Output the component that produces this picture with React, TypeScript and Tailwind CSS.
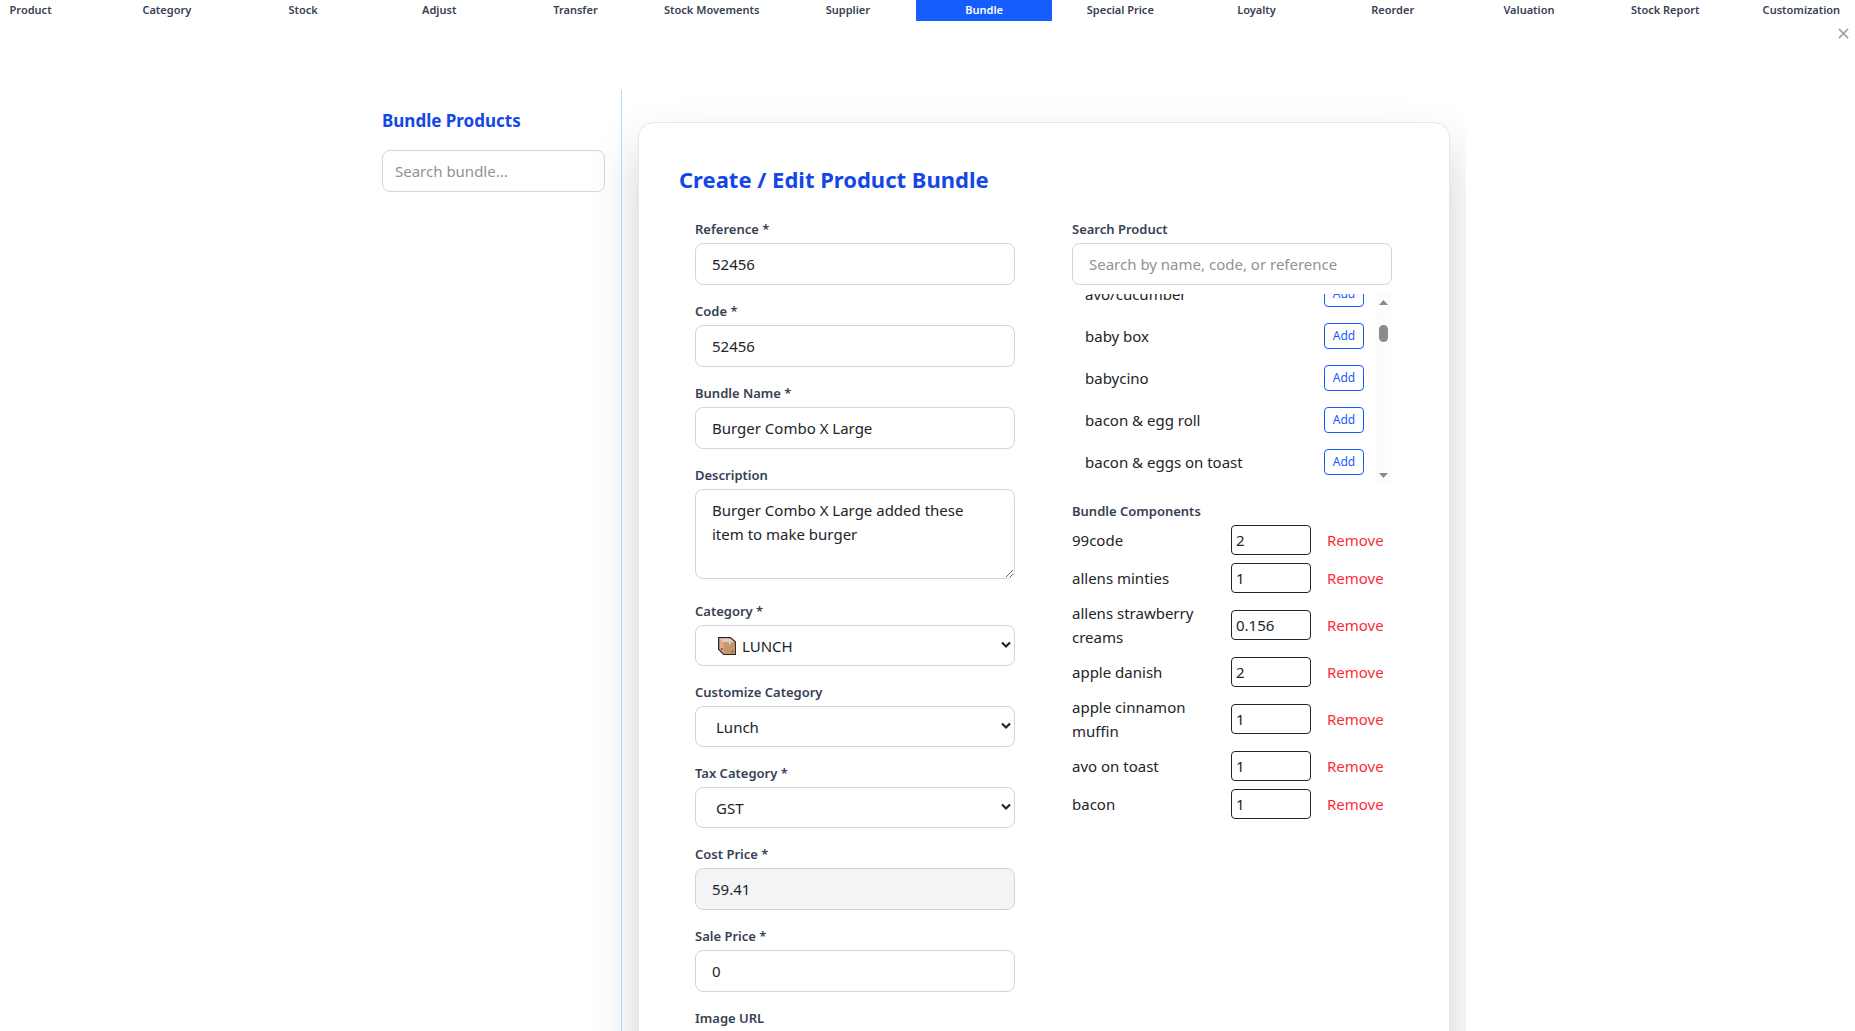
import { useState } from 'react';
import type { ReactNode } from 'react';

const tabs = [
  'Product',
  'Category',
  'Stock',
  'Adjust',
  'Transfer',
  'Stock Movements',
  'Supplier',
  'Bundle',
  'Special Price',
  'Loyalty',
  'Reorder',
  'Valuation',
  'Stock Report',
  'Customization',
];

const products = ['avo/cucumber', 'baby box', 'babycino', 'bacon & egg roll', 'bacon & eggs on toast'];

const initialComponents = [
  { name: '99code', qty: '2' },
  { name: 'allens minties', qty: '1' },
  { name: 'allens strawberry creams', qty: '0.156' },
  { name: 'apple danish', qty: '2' },
  { name: 'apple cinnamon muffin', qty: '1' },
  { name: 'avo on toast', qty: '1' },
  { name: 'bacon', qty: '1' },
];

const inputClass =
  'block h-[42px] w-full rounded-lg border border-gray-300 px-4 outline-none placeholder:text-[#909294]';
const labelClass = 'mb-1 block text-[13px] leading-5 font-semibold text-gray-700';

interface FieldProps {
  id: string;
  label: string;
  children: ReactNode;
}

function Field({ id, label, children }: FieldProps) {
  return (
    <div className="mb-4">
      <label htmlFor={id} className={labelClass}>
        {label}
      </label>
      {children}
    </div>
  );
}

interface SelectProps {
  id: string;
  options: string[];
  icon?: ReactNode;
}

function Select({ id, options, icon }: SelectProps) {
  return (
    <div className="relative">
      <select
        id={id}
        className={`block h-[41px] w-full appearance-none rounded-lg border border-gray-300 bg-white pr-8 outline-none ${icon ? 'pl-[46px]' : 'pl-5'}`}
      >
        {options.map((o) => (
          <option key={o}>{o}</option>
        ))}
      </select>
      {icon}
      <svg className="pointer-events-none absolute top-4 right-1 h-2 w-[10px]" viewBox="0 0 10 8" fill="none" aria-hidden="true">
        <path d="M1 1.5 L5 5.5 L9 1.5" stroke="#212529" strokeWidth="2.2" />
      </svg>
    </div>
  );
}

function BoxIcon() {
  return (
    <svg className="pointer-events-none absolute top-3 left-[23px] h-[18px] w-[18px]" viewBox="0 0 19 19" aria-hidden="true">
      <path d="M.7.7H13L18.3 5v13.3H6L.7 13z" fill="#e0a98a" stroke="#212529" strokeWidth="1.3" />
      <path d="M1.5 1.5H13l4.5 4H6z" fill="#efc9ad" />
      <path d="M6 5.5h11.6v12.2H6z" fill="#c69668" />
      <path d="M7 1.5h2.5l4 4v2.5h-2V5.5z" fill="#cfd0d6" />
      <circle cx="4" cy="12.7" r="1.1" fill="#e81c3c" />
      <path d="M13.5 16l2.5-2v2z" fill="#6b4a3a" />
    </svg>
  );
}

function ProductList() {
  return (
    <div className="mt-2 flex h-48 border border-transparent">
      <ul className="flex min-w-0 flex-1 flex-col justify-end overflow-hidden pb-px">
        {products.map((p) => (
          <li key={p} className="flex shrink-0 items-center justify-between px-3 py-2">
            <span>{p}</span>
            <button className="h-[26px] w-10 rounded border border-blue-600 text-[12px] leading-4 text-blue-600">Add</button>
          </li>
        ))}
      </ul>
      {/* Scrollbar */}
      <div className="flex w-[15px] flex-col items-center justify-between bg-[#fcfcfc] py-[6px]" aria-hidden="true">
        <div className="flex flex-col items-center gap-5">
          <svg className="h-[5px] w-[9px]" viewBox="0 0 9 5">
            <path d="M4.5 0L9 5H0z" fill="#8b8b8b" />
          </svg>
          <span className="h-[17px] w-[9px] rounded-full bg-[#8b8b8b]" />
        </div>
        <svg className="h-[5px] w-[9px]" viewBox="0 0 9 5">
          <path d="M4.5 5L9 0H0z" fill="#8b8b8b" />
        </svg>
      </div>
    </div>
  );
}

function BundleComponents() {
  const [items, setItems] = useState(initialComponents);

  return (
    <section className="mt-4">
      <h3 className={labelClass}>Bundle Components</h3>
      <ul>
        {items.map((item) => (
          <li key={item.name} className="mb-2 flex items-center gap-4">
            <span className="flex-1">{item.name}</span>
            <input
              className="h-[30px] w-20 rounded border border-[#212529] px-1 outline-none"
              aria-label={`Quantity of ${item.name}`}
              defaultValue={item.qty}
            />
            <button
              className="w-[65px] text-left text-red-500"
              onClick={() => setItems(items.filter((i) => i.name !== item.name))}
            >
              Remove
            </button>
          </li>
        ))}
      </ul>
    </section>
  );
}

export default function App() {
  return (
    <div className="h-screen overflow-hidden bg-white pr-[23px] font-['Noto_Sans','Open_Sans',sans-serif] text-[15px] leading-6 text-[#212529]">
      <nav className="-mx-[37px] grid grid-cols-14 gap-px">
        {tabs.map((tab) => (
          <button
            key={tab}
            className={`h-[21px] pb-[2px] text-[11px] leading-4 font-semibold whitespace-nowrap ${
              tab === 'Bundle' ? 'bg-blue-600 text-white' : 'text-gray-700'
            }`}
          >
            {tab}
          </button>
        ))}
      </nav>

      <div className="-mr-[23px] flex h-[69px] items-start justify-end pr-[6px]">
        <button className="flex h-6 w-3 items-center justify-center text-gray-400" aria-label="Close">
          <svg className="h-[11px] w-[11px]" viewBox="0 0 12 12" fill="none" stroke="currentColor" strokeWidth="1.7" aria-hidden="true">
            <path d="M1 1l10 10M11 1L1 11" />
          </svg>
        </button>
      </div>

      <div className="mx-auto flex max-w-[1100px] overflow-hidden">
        <aside className="w-64 shrink-0 border-r border-blue-200 p-4">
          <h2 className="mb-[14px] text-[17px] leading-[30px] font-bold text-blue-700">Bundle Products</h2>
          <input
            className="block h-[42px] w-full rounded-lg border border-gray-300 px-3 outline-none placeholder:text-[#909294]"
            aria-label="Search bundle"
            placeholder="Search bundle..."
          />
        </aside>

        <main className="min-w-0 flex-1 px-4 py-8">
          <div className="rounded-2xl border border-gray-200 bg-white p-10 shadow-[0_25px_50px_rgba(0,0,0,0.18)]">
            <h1 className="mb-6 text-[22px] leading-8 font-bold text-blue-700">Create / Edit Product Bundle</h1>
            <form className="grid grid-cols-2 gap-[25px] pr-px">
              <div className="px-4">
                <Field id="reference" label="Reference *">
                  <input id="reference" className={inputClass} defaultValue="52456" />
                </Field>
                <Field id="code" label="Code *">
                  <input id="code" className={inputClass} defaultValue="52456" />
                </Field>
                <Field id="name" label="Bundle Name *">
                  <input id="name" className={inputClass} defaultValue="Burger Combo X Large" />
                </Field>
                <Field id="description" label="Description">
                  <textarea
                    id="description"
                    rows={3}
                    className="mb-[22px] block w-full rounded-lg border border-gray-300 px-4 py-2 outline-none"
                    defaultValue="Burger Combo X Large added these item to make burger"
                  />
                </Field>
                <Field id="category" label="Category *">
                  <Select id="category" options={['LUNCH']} icon={<BoxIcon />} />
                </Field>
                <Field id="customize" label="Customize Category">
                  <Select id="customize" options={['Lunch']} />
                </Field>
                <Field id="tax" label="Tax Category *">
                  <Select id="tax" options={['GST']} />
                </Field>
                <Field id="cost" label="Cost Price *">
                  <input id="cost" className={`${inputClass} bg-gray-100`} readOnly defaultValue="59.41" />
                </Field>
                <Field id="sale" label="Sale Price *">
                  <input id="sale" className={inputClass} defaultValue="0" />
                </Field>
                <Field id="image" label="Image URL">
                  <input id="image" className={inputClass} />
                </Field>
              </div>

              <div className="px-4">
                <label htmlFor="search" className={labelClass}>
                  Search Product
                </label>
                <input id="search" className={inputClass} placeholder="Search by name, code, or reference" />
                <ProductList />
                <BundleComponents />
              </div>
            </form>
          </div>
        </main>
      </div>
    </div>
  );
}
